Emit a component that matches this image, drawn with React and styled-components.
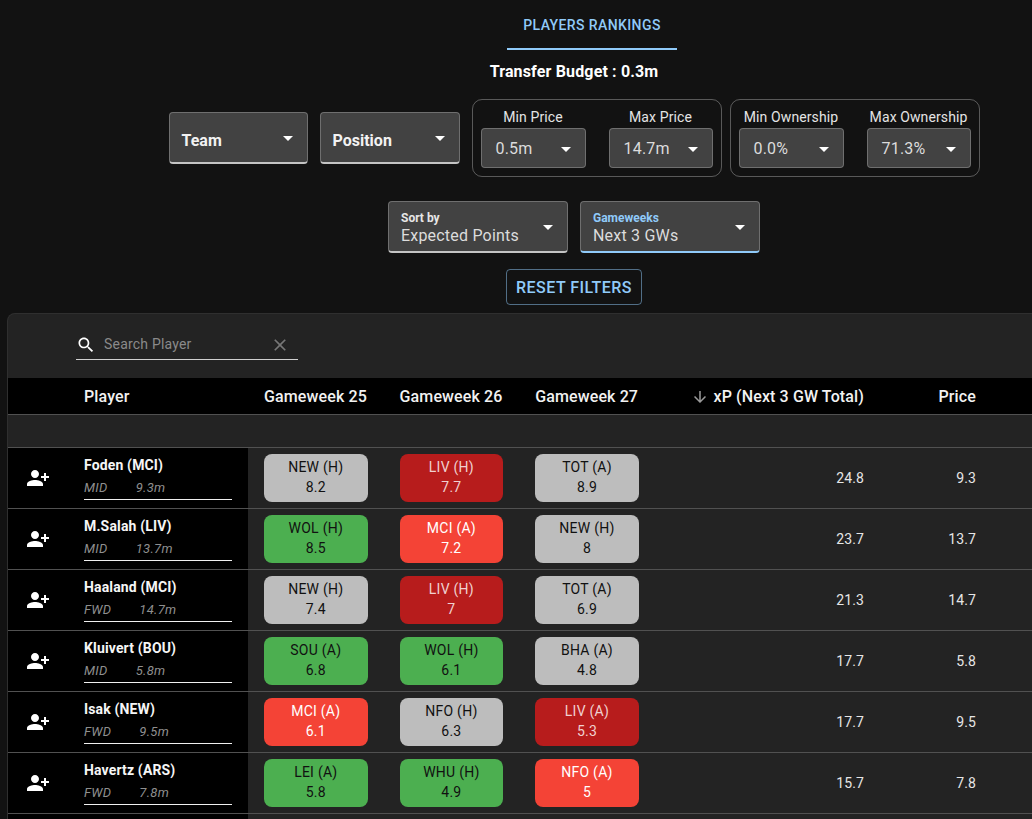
import React from "react";

import styled, { createGlobalStyle, css } from "styled-components";

const GlobalStyle = createGlobalStyle`
  html, body {
    margin: 0;
    padding: 0;
    background: #121212;
  }
  * {
    box-sizing: border-box;
  }
`;

const Page = styled.div`
  width: 1032px;
  height: 819px;
  overflow: hidden;
  background: #121212;
  color: #fff;
  font-family: Roboto, "Liberation Sans", sans-serif;
`;

const Content = styled.div`
  width: 1148px;
  display: flex;
  flex-direction: column;
  align-items: center;
`;

const Tabs = styled.div`
  align-self: flex-start;
  display: flex;
  margin-left: 507px;
`;

const Tab = styled.div`
  width: 170px;
  height: 50px;
  padding-top: 2px;
  display: flex;
  align-items: center;
  justify-content: center;
  border-bottom: 2px solid #90caf9;
  color: #90caf9;
  font-size: 14px;
  font-weight: 500;
  letter-spacing: 0.4px;
  text-transform: uppercase;
`;

const Budget = styled.div`
  margin-top: 10px;
  font-size: 16px;
  font-weight: 700;
  line-height: 24px;
  letter-spacing: 0.15px;
`;

const FilterRow = styled.div`
  margin-top: 15px;
  height: 78px;
  display: flex;
  align-items: center;
  gap: 12px;
`;

const SortRow = styled.div`
  margin-top: 24px;
  display: flex;
  gap: 12px;
`;

const Group = styled.div`
  width: 250px;
  height: 78px;
  padding: 8px;
  margin-left: ${(props) => props.ml || 0};
  border: 1px solid rgba(255, 255, 255, 0.3);
  border-radius: 10px;
  display: grid;
  grid-template-columns: 105px 104px;
  justify-content: space-between;
`;

const Field = styled.div`
  display: flex;
  flex-direction: column;
  align-items: center;
`;

const FieldLabel = styled.div`
  height: 21px;
  margin-top: -1px;
  font-size: 14px;
  line-height: 20px;
  letter-spacing: 0.1px;
  white-space: nowrap;
  color: #e4e4e4;
`;

const Select = styled.div`
  position: relative;
  width: ${(props) => props.width || "100%"};
  height: ${(props) => props.height || "40px"};
  padding: ${(props) => props.pad || "2px 12px 0"};
  display: flex;
  flex-direction: column;
  justify-content: center;
  background: #424242;
  border: 1px solid rgba(255, 255, 255, 0.24);
  border-radius: 4px;
  ${(props) =>
    props.underline &&
    css`
      border-bottom: 2px solid ${props.underline};
    `}
`;

const Arrow = styled.svg`
  position: absolute;
  right: 7px;
  top: ${(props) => props.top || "8px"};
  width: 24px;
  height: 24px;
  fill: #fff;
`;

const SelectValue = styled.span`
  font-size: 16px;
  line-height: 20px;
  letter-spacing: 0.2px;
  color: #dcdcdc;
`;

const BoldValue = styled.span`
  font-size: 16px;
  font-weight: 700;
  margin-top: 4px;
  color: #f2f2f2;
`;

const SmallLabel = styled.span`
  font-size: 12px;
  font-weight: 700;
  line-height: 15px;
  margin-top: 1px;
  color: ${(props) => props.color || "#e6e6e6"};
`;

const ResetButton = styled.button`
  margin-top: 16px;
  width: 136px;
  height: 36px;
  padding: 0;
  background: transparent;
  border: 1px solid rgba(144, 202, 249, 0.5);
  border-radius: 4px;
  color: #90caf9;
  font-family: inherit;
  font-size: 16px;
  font-weight: 500;
  letter-spacing: 0.45px;
  text-transform: uppercase;
`;

const Paper = styled.div`
  align-self: flex-start;
  width: 1141px;
  margin: 8px 0 0 7px;
  background: #232323;
  border: 1px solid #2f2f2f;
  border-bottom: 0;
  border-radius: 8px 8px 0 0;
`;

const SearchBar = styled.div`
  height: 64px;
  padding: 18px 0 0 68px;
`;

const SearchField = styled.div`
  width: 222px;
  height: 28px;
  display: flex;
  align-items: center;
  border-bottom: 1px solid #d0d0d0;
  padding-bottom: 2px;
`;

const SearchIcon = styled.svg`
  width: 20px;
  height: 20px;
  fill: #fff;
  margin-right: 8px;
`;

const ClearIcon = styled.svg`
  width: 20px;
  height: 20px;
  fill: #777;
  margin-left: auto;
  margin-right: 8px;
`;

const Placeholder = styled.span`
  font-size: 14px;
  letter-spacing: 0.2px;
  color: #8a8a8a;
  margin-bottom: 1px;
`;

const gridColumns = "240px 135.6px 135.6px 135.6px 225.2px 112px 1fr";

const HeadRow = styled.div`
  height: 37px;
  display: grid;
  grid-template-columns: ${gridColumns};
  align-items: center;
  background: #000;
  border-bottom: 1px solid #515151;
  font-size: 16px;
  font-weight: 500;
  letter-spacing: 0.12px;
  color: #f2f2f2;
`;

const HeadCell = styled.div`
  padding: ${(props) => (props.numeric ? "0 16px 0 0" : "0 0 0 16px")};
  text-align: ${(props) => (props.numeric ? "right" : "left")};
  white-space: nowrap;
`;

const PlayerHead = styled.div`
  padding-left: 76px;
`;

const SortArrow = styled.svg`
  width: 18px;
  height: 18px;
  fill: #9a9a9a;
  vertical-align: -4px;
  margin-right: 4px;
`;

const EmptyRow = styled.div`
  height: 33px;
  border-bottom: 1px solid #515151;
`;

const Row = styled.div`
  height: 61px;
  display: grid;
  grid-template-columns: ${gridColumns};
  border-bottom: 1px solid #515151;
`;

const PlayerCell = styled.div`
  display: flex;
  align-items: center;
  background: #000;
`;

const AddIcon = styled.svg`
  width: 24px;
  height: 24px;
  margin-left: 18px;
  fill: #fff;
`;

const PlayerInfo = styled.div`
  margin-left: 34px;
  width: 148px;
  height: 44px;
  border-bottom: 1px solid #f0f0f0;
`;

const PlayerName = styled.div`
  margin-top: -1px;
  font-size: 14px;
  font-weight: 700;
  line-height: 20px;
  letter-spacing: 0.15px;
  color: #f6f6f6;
`;

const PlayerMeta = styled.div`
  margin-top: 5px;
  display: flex;
  gap: 28px;
  font-size: 13px;
  font-style: italic;
  line-height: 16px;
  letter-spacing: 0.3px;
  color: #8f8f8f;
`;

const FixtureCell = styled.div`
  padding: 6px 16px;
`;

const chipColors = {
  grey: css`
    background: #bdbdbd;
    color: #111;
  `,
  green: css`
    background: #4caf50;
    color: #111;
  `,
  red: css`
    background: #f44336;
    color: #fff;
  `,
  dark: css`
    background: #b71c1c;
    color: #f0d0d0;
  `,
};

const Chip = styled.div`
  height: 48px;
  padding-bottom: 2px;
  border-radius: 8px;
  display: flex;
  flex-direction: column;
  align-items: center;
  justify-content: center;
  font-size: 14px;
  line-height: 20px;
  letter-spacing: 0.25px;
  ${(props) => chipColors[props.tone]}
`;

const NumberCell = styled.div`
  display: flex;
  align-items: center;
  justify-content: flex-end;
  padding: 0 16px 1px 0;
  font-size: 14px;
  letter-spacing: 0.1px;
  color: #e6e6e6;
`;

const players = [
  {
    name: "Foden (MCI)", pos: "MID", cost: "9.3m", xp: "24.8", price: "9.3",
    fixtures: [["NEW (H)", "8.2", "grey"], ["LIV (H)", "7.7", "dark"], ["TOT (A)", "8.9", "grey"]],
  },
  {
    name: "M.Salah (LIV)", pos: "MID", cost: "13.7m", xp: "23.7", price: "13.7",
    fixtures: [["WOL (H)", "8.5", "green"], ["MCI (A)", "7.2", "red"], ["NEW (H)", "8", "grey"]],
  },
  {
    name: "Haaland (MCI)", pos: "FWD", cost: "14.7m", xp: "21.3", price: "14.7",
    fixtures: [["NEW (H)", "7.4", "grey"], ["LIV (H)", "7", "dark"], ["TOT (A)", "6.9", "grey"]],
  },
  {
    name: "Kluivert (BOU)", pos: "MID", cost: "5.8m", xp: "17.7", price: "5.8",
    fixtures: [["SOU (A)", "6.8", "green"], ["WOL (H)", "6.1", "green"], ["BHA (A)", "4.8", "grey"]],
  },
  {
    name: "Isak (NEW)", pos: "FWD", cost: "9.5m", xp: "17.7", price: "9.5",
    fixtures: [["MCI (A)", "6.1", "red"], ["NFO (H)", "6.3", "grey"], ["LIV (A)", "5.3", "dark"]],
  },
  {
    name: "Havertz (ARS)", pos: "FWD", cost: "7.8m", xp: "15.7", price: "7.8",
    fixtures: [["LEI (A)", "5.8", "green"], ["WHU (H)", "4.9", "green"], ["NFO (A)", "5", "red"]],
  },
];

const DropArrow = (props) => (
  <Arrow viewBox="0 0 24 24" {...props}>
    <path d="M7 10l5 5 5-5z" />
  </Arrow>
);

const RangeGroup = ({ fields, ml }) => (
  <Group ml={ml}>
    {fields.map(([label, value]) => (
      <Field key={label}>
        <FieldLabel>{label}</FieldLabel>
        <Select pad="1px 14px 0">
          <SelectValue>{value}</SelectValue>
          <DropArrow />
        </Select>
      </Field>
    ))}
  </Group>
);

const App = () => {
  return (
    <Page>
      <GlobalStyle />
      <Content>
        <Tabs>
          <Tab>Players Rankings</Tab>
        </Tabs>
        <Budget>Transfer Budget : 0.3m</Budget>
        <FilterRow>
          <Select width="139px" height="52px" underline="#c4c4c4">
            <BoldValue>Team</BoldValue>
            <DropArrow top="13px" />
          </Select>
          <Select width="140px" height="52px" underline="#c4c4c4">
            <BoldValue>Position</BoldValue>
            <DropArrow top="13px" />
          </Select>
          <RangeGroup fields={[["Min Price", "0.5m"], ["Max Price", "14.7m"]]} />
          <RangeGroup ml="-4px" fields={[["Min Ownership", "0.0%"], ["Max Ownership", "71.3%"]]} />
        </FilterRow>
        <SortRow>
          <Select width="180px" height="52px" underline="#c4c4c4">
            <SmallLabel>Sort by</SmallLabel>
            <SelectValue>Expected Points</SelectValue>
            <DropArrow top="13px" />
          </Select>
          <Select width="180px" height="52px" underline="#90caf9">
            <SmallLabel color="#90caf9">Gameweeks</SmallLabel>
            <SelectValue>Next 3 GWs</SelectValue>
            <DropArrow top="13px" />
          </Select>
        </SortRow>
        <ResetButton>Reset Filters</ResetButton>
        <Paper>
          <SearchBar>
            <SearchField>
              <SearchIcon viewBox="0 0 24 24">
                <path d="M15.5 14h-.79l-.28-.27C15.41 12.59 16 11.11 16 9.5 16 5.91 13.09 3 9.5 3S3 5.91 3 9.5 5.91 16 9.5 16c1.61 0 3.09-.59 4.23-1.57l.27.28v.79l5 4.99L20.49 19l-4.99-5zm-6 0C7.01 14 5 11.99 5 9.5S7.01 5 9.5 5 14 7.01 14 9.5 11.99 14 9.5 14z" />
              </SearchIcon>
              <Placeholder>Search Player</Placeholder>
              <ClearIcon viewBox="0 0 24 24">
                <path d="M19 6.41 17.59 5 12 10.59 6.41 5 5 6.41 10.59 12 5 17.59 6.41 19 12 13.41 17.59 19 19 17.59 13.41 12z" />
              </ClearIcon>
            </SearchField>
          </SearchBar>
          <HeadRow>
            <PlayerHead>Player</PlayerHead>
            <HeadCell>Gameweek 25</HeadCell>
            <HeadCell>Gameweek 26</HeadCell>
            <HeadCell>Gameweek 27</HeadCell>
            <HeadCell numeric>
              <SortArrow viewBox="0 0 24 24">
                <path d="M20 12l-1.41-1.41L13 16.17V4h-2v12.17l-5.58-5.59L4 12l8 8 8-8z" />
              </SortArrow>
              xP (Next 3 GW Total)
            </HeadCell>
            <HeadCell numeric>Price</HeadCell>
          </HeadRow>
          <EmptyRow />
          {players.map((player) => (
            <Row key={player.name}>
              <PlayerCell>
                <AddIcon viewBox="0 0 24 24">
                  <path d="M13 8c0-2.21-1.79-4-4-4S5 5.79 5 8s1.79 4 4 4 4-1.79 4-4zm2 2v2h3v3h2v-3h3v-2h-3V7h-2v3h-3zM1 18v2h16v-2c0-2.66-5.33-4-8-4s-8 1.34-8 4z" />
                </AddIcon>
                <PlayerInfo>
                  <PlayerName>{player.name}</PlayerName>
                  <PlayerMeta>
                    <span>{player.pos}</span>
                    <span>{player.cost}</span>
                  </PlayerMeta>
                </PlayerInfo>
              </PlayerCell>
              {player.fixtures.map(([team, points, tone]) => (
                <FixtureCell key={team}>
                  <Chip tone={tone}>
                    <span>{team}</span>
                    <span>{points}</span>
                  </Chip>
                </FixtureCell>
              ))}
              <NumberCell>{player.xp}</NumberCell>
              <NumberCell>{player.price}</NumberCell>
            </Row>
          ))}
          <Row>
            <PlayerCell />
          </Row>
        </Paper>
      </Content>
    </Page>
  );
};

export default App;
